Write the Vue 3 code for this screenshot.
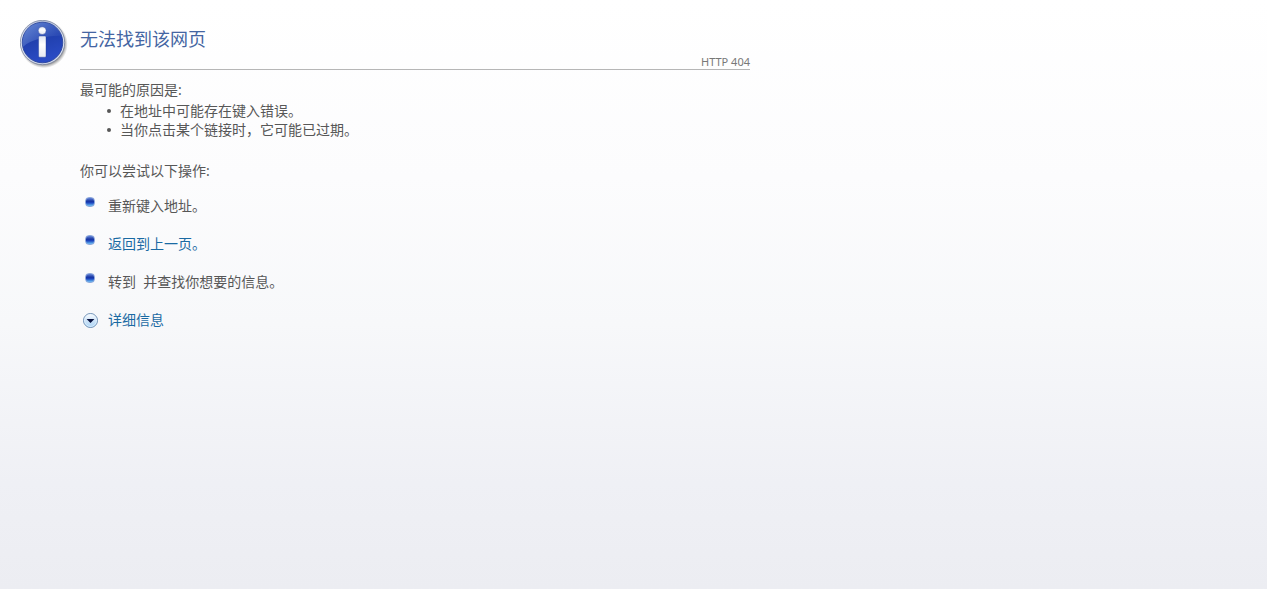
<script setup>
import { ref } from 'vue'

const causes = ['在地址中可能存在键入错误。', '当你点击某个链接时，它可能已过期。']
const expanded = ref(false)
const goBack = () => window.history.back()
</script>

<template>
  <main class="page">
    <svg class="info" viewBox="0 0 50 50" aria-hidden="true">
      <defs>
        <linearGradient id="rim" x1="0" y1="0" x2="0" y2="1">
          <stop offset="0" stop-color="#b9c3dc" />
          <stop offset="0.5" stop-color="#e6ebf6" />
          <stop offset="1" stop-color="#d3d9e8" />
        </linearGradient>
        <linearGradient id="disc" x1="0" y1="0" x2="0.3" y2="1">
          <stop offset="0" stop-color="#3558bb" />
          <stop offset="0.5" stop-color="#2140ae" />
          <stop offset="1" stop-color="#2a4bc4" />
        </linearGradient>
        <linearGradient id="gloss" x1="0" y1="0" x2="1" y2="0.6">
          <stop offset="0" stop-color="#86a6e2" stop-opacity="0.65" />
          <stop offset="1" stop-color="#5f80d4" stop-opacity="0.1" />
        </linearGradient>
        <linearGradient id="letter" x1="0" y1="0" x2="0" y2="1">
          <stop offset="0" stop-color="#dfe5f3" />
          <stop offset="0.4" stop-color="#ffffff" />
          <stop offset="1" stop-color="#e6e9f2" />
        </linearGradient>
        <radialGradient id="shade">
          <stop offset="0.85" stop-color="#555" stop-opacity="0.6" />
          <stop offset="1" stop-color="#777" stop-opacity="0" />
        </radialGradient>
      </defs>
      <circle cx="23.8" cy="24.2" r="24" fill="url(#shade)" />
      <circle cx="22.5" cy="22.5" r="22.2" fill="url(#rim)" stroke="#6f7a96" stroke-width="0.7" />
      <circle cx="22.5" cy="22.5" r="20.3" fill="url(#disc)" stroke="#223c96" stroke-width="0.8" />
      <path d="M2.8 27C1.5 12 10 2.8 22.5 2.8C33 2.8 40 9 41.8 16C30 15 12 19 2.8 27Z" fill="url(#gloss)" />
      <circle cx="22.2" cy="10.6" r="3.9" fill="url(#letter)" stroke="#1d3893" stroke-width="0.4" />
      <rect x="18.6" y="16" width="7.4" height="21.2" rx="1" fill="url(#letter)" stroke="#1d3893" stroke-width="0.4" />
    </svg>

    <div class="content">
      <header class="heading">
        <h1>无法找到该网页</h1>
        <p class="code">HTTP 404</p>
      </header>

      <section class="causes">
        <h2>最可能的原因是:</h2>
        <ul>
          <li v-for="cause in causes" :key="cause">{{ cause }}</li>
        </ul>
      </section>

      <section class="actions">
        <h2>你可以尝试以下操作:</h2>
        <ul>
          <li><span class="bullet"></span><span>重新键入地址。</span></li>
          <li><span class="bullet"></span><a href="#" @click.prevent="goBack">返回到上一页。</a></li>
          <li><span class="bullet"></span><span>转到&nbsp; 并查找你想要的信息。</span></li>
        </ul>
        <button type="button" class="more" :aria-expanded="expanded" @click="expanded = !expanded">
          <svg viewBox="0 0 16 16" aria-hidden="true">
            <defs>
              <linearGradient id="knob" x1="0" y1="0" x2="0" y2="1">
                <stop offset="0" stop-color="#ffffff" />
                <stop offset="0.5" stop-color="#cfe4f8" />
                <stop offset="1" stop-color="#a9d4f6" />
              </linearGradient>
            </defs>
            <circle cx="8.5" cy="8.5" r="7" fill="url(#knob)" stroke="#6d8fb5" />
            <circle cx="8.5" cy="8.5" r="6" fill="none" stroke="#e6f4ff" stroke-opacity="0.7" />
            <path d="M4.6 7H12.4L8.5 11Z" fill="#08123f" />
          </svg>
          <span>详细信息</span>
        </button>
      </section>
    </div>
  </main>
</template>

<style>
body {
  margin: 0;
}
</style>

<style scoped>
.page {
  box-sizing: border-box;
  min-height: 100vh;
  padding: 20px;
  display: flex;
  align-items: flex-start;
  gap: 10px;
  background: linear-gradient(#ffffff 0%, #fcfcfd 30%, #f7f8fa 55%, #eff0f5 82%, #ecedf2 100%);
  color: #575757;
  font-family: "Noto Sans", "Noto Sans CJK SC", sans-serif;
  font-size: 14px;
  line-height: 20px;
}

.info {
  flex: none;
  width: 50px;
  height: 50px;
}

.content {
  flex: 1;
  max-width: 670px;
}

h1,
h2,
p,
ul {
  margin: 0;
  padding: 0;
  font-weight: 400;
}

.heading {
  border-bottom: 1px solid #b6b6b6;
}

h1 {
  padding-top: 5px;
  color: #4465a2;
  font-size: 18px;
  line-height: 28px;
}

.code {
  padding-top: 1px;
  color: #787878;
  font-size: 11px;
  line-height: 15px;
  text-align: right;
}

h2 {
  font-size: 14px;
  line-height: 20px;
}

.causes {
  padding-top: 10px;
}

.causes ul {
  padding: 1px 0 0 27px;
  list-style: none;
}

.causes li {
  display: flex;
  align-items: center;
  gap: 9px;
  line-height: 19px;
}

.causes li::before {
  content: "";
  width: 4px;
  height: 4px;
  border-radius: 50%;
  background: currentColor;
}

.actions {
  padding-top: 22px;
}

.actions ul {
  padding-top: 6px;
  list-style: none;
}

.actions li {
  display: flex;
  align-items: center;
  height: 38px;
}

.bullet {
  box-sizing: border-box;
  width: 10px;
  height: 10px;
  margin: 0 13px 8px 5px;
  border: 1px solid #8fa9dc;
  border-radius: 4px;
  background: linear-gradient(#6486d8 0%, #1733a0 40%, #1c45c0 60%, #6fc4f5 100%);
}

a,
.more {
  color: #1a6aa3;
  text-decoration: none;
}

.more {
  display: flex;
  align-items: center;
  gap: 10px;
  height: 38px;
  padding: 0 0 0 2px;
  border: 0;
  background: none;
  font: inherit;
  cursor: pointer;
}

.more svg {
  width: 16px;
  height: 16px;
}
</style>
